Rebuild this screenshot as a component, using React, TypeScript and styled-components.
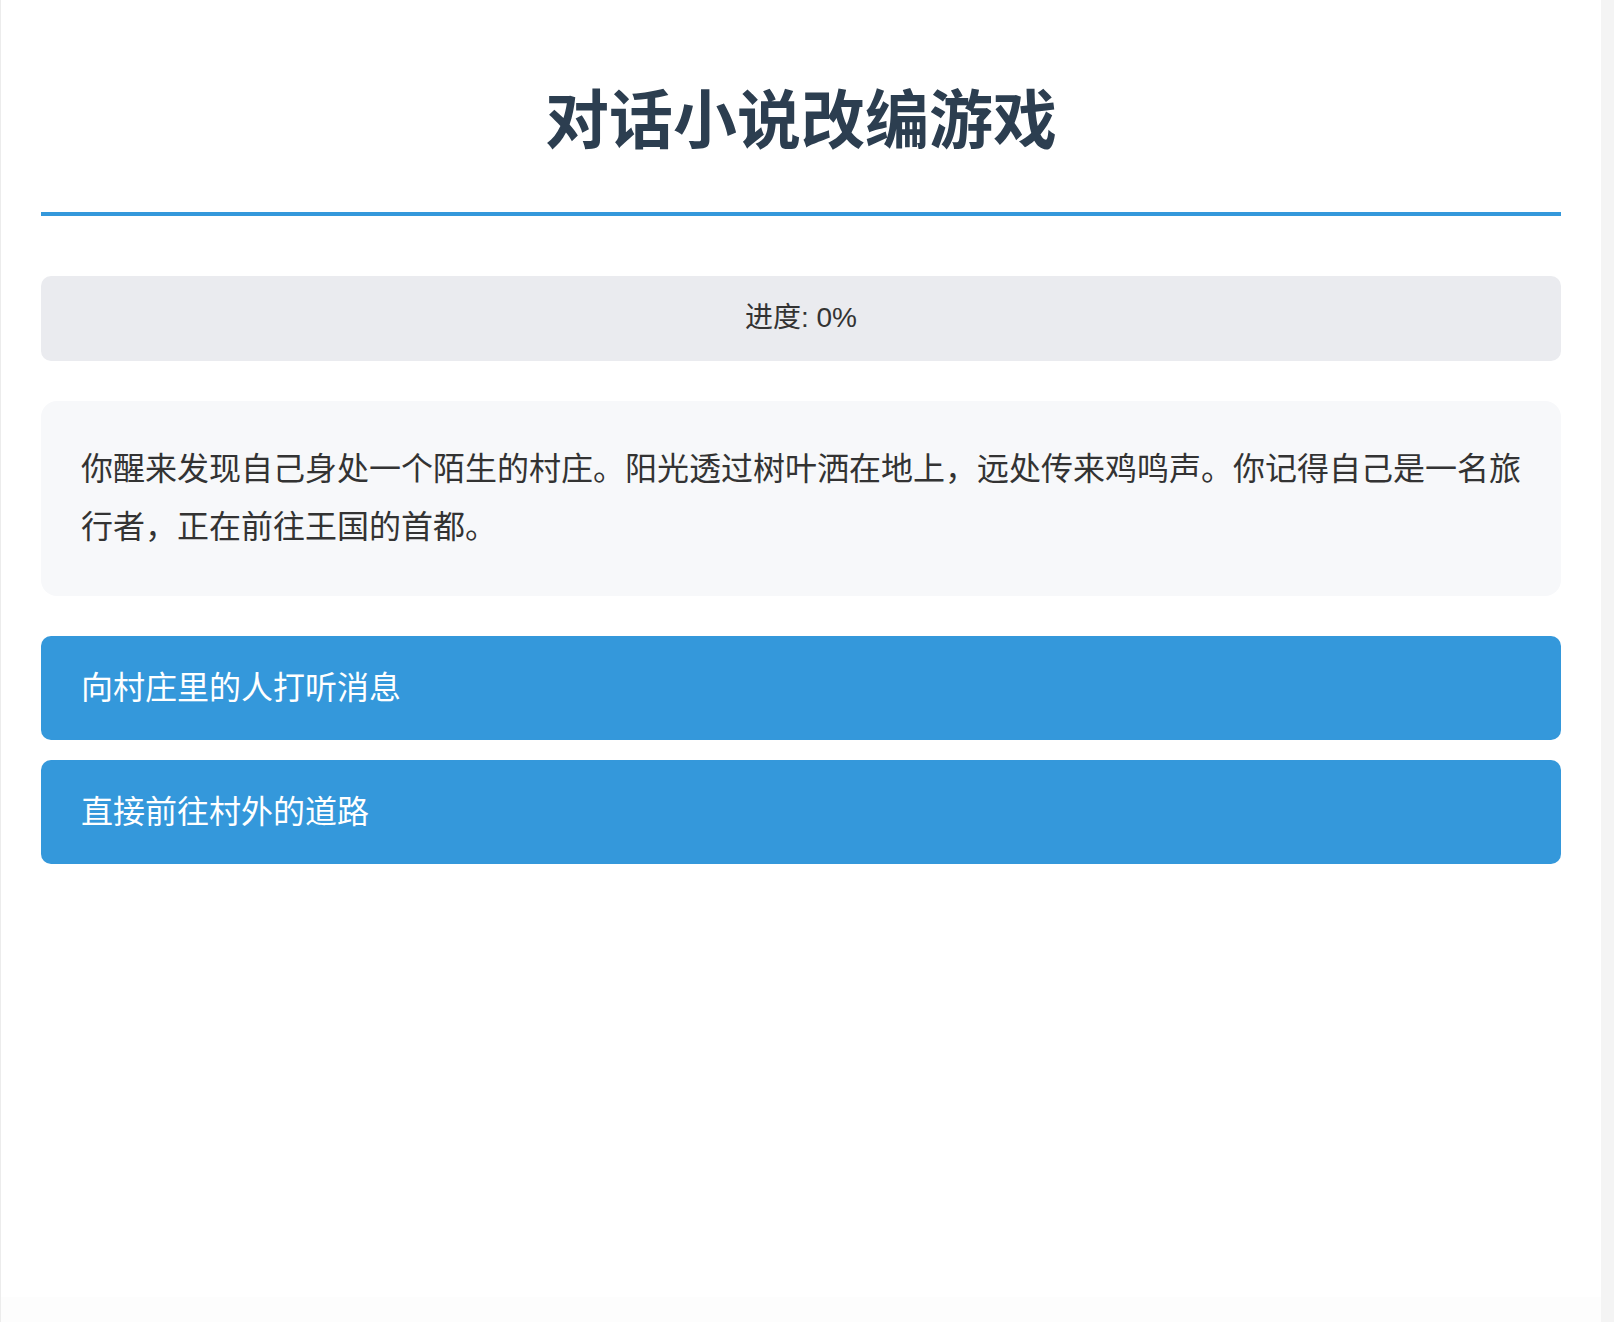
import { useState } from "react"
import styled, { createGlobalStyle } from "styled-components"

const GlobalStyle = createGlobalStyle`
  html, body {
    margin: 0;
    padding: 0;
  }
  body {
    background: #f4f4f4;
    color: #333;
    font-family: "Liberation Sans", "Noto Sans CJK SC", sans-serif;
    line-height: 1.6;
  }
`

const Page = styled.div`
  box-sizing: border-box;
  width: calc(100% - 13px);
  min-height: 100vh;
  padding: 40px;
  background: linear-gradient(#ffffff 1297px, #fdfdfd 1297px);
  border-left: 1px solid #ececec;
`

const Title = styled.h1`
  margin: 0 0 60px 0;
  padding: 30px 0 40px 0;
  border-bottom: 4px solid #3498db;
  color: #2c3e50;
  font-size: 64px;
  font-weight: 700;
  line-height: 1.6;
  text-align: center;
`

const Progress = styled.div`
  margin-bottom: 40px;
  padding: 20px;
  border-radius: 10px;
  background: #eaebef;
  font-size: 28px;
  text-align: center;
`

const Story = styled.div`
  margin-bottom: 40px;
  padding: 40px;
  border-radius: 16px;
  background: #f7f8fa;
  font-size: 32px;
  line-height: 1.8;
`

const Choices = styled.div`
  display: flex;
  flex-direction: column;
  gap: 20px;
`

const Choice = styled.button`
  display: block;
  width: 100%;
  padding: 30px 40px;
  border: 0;
  border-radius: 10px;
  background: #3498db;
  color: #ffffff;
  font-family: inherit;
  font-size: 32px;
  line-height: 44px;
  text-align: left;
  cursor: pointer;

  &:hover {
    background: #2f8ccc;
  }
`

type Scene = {
  text: string
  choices: { label: string; next: number }[]
}

const scenes: Scene[] = [
  {
    text: "你醒来发现自己身处一个陌生的村庄。阳光透过树叶洒在地上，远处传来鸡鸣声。你记得自己是一名旅行者，正在前往王国的首都。",
    choices: [
      { label: "向村庄里的人打听消息", next: 1 },
      { label: "直接前往村外的道路", next: 2 },
    ],
  },
  {
    text: "村民告诉你，通往首都的大路最近不太平，常有强盗出没。一位老人建议你走山间的小路。",
    choices: [{ label: "重新开始", next: 0 }],
  },
  {
    text: "你踏上了村外的道路，尘土飞扬，前方的路还很漫长。",
    choices: [{ label: "重新开始", next: 0 }],
  },
]

const App = () => {
  const [current, setCurrent] = useState(0)
  const scene = scenes[current]
  const progress = current === 0 ? 0 : 50

  return (
    <>
      <GlobalStyle />
      <Page>
        <Title>对话小说改编游戏</Title>
        <Progress>进度: {progress}%</Progress>
        <Story>{scene.text}</Story>
        <Choices>
          {scene.choices.map(choice => (
            <Choice key={choice.label} onClick={() => setCurrent(choice.next)}>
              {choice.label}
            </Choice>
          ))}
        </Choices>
      </Page>
    </>
  )
}

export default App
